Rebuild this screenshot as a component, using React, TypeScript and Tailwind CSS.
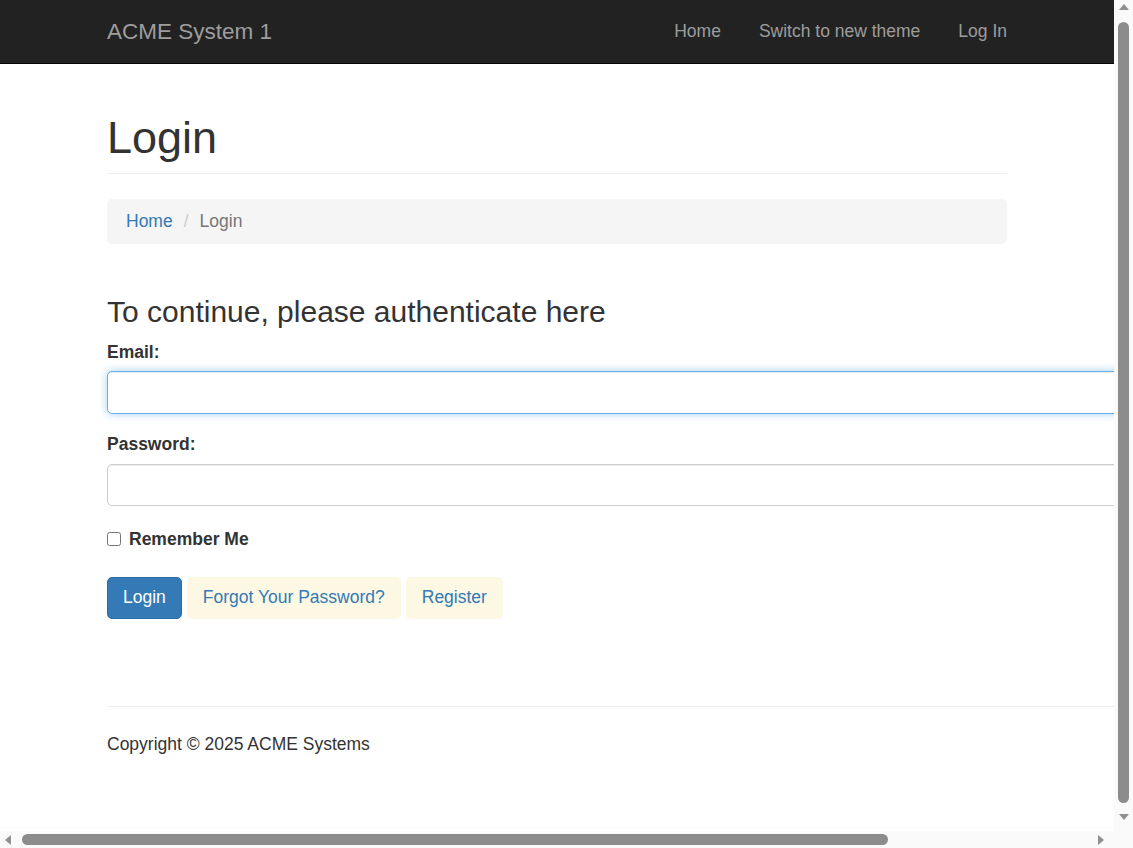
import React from "react";

const navLinks = ["Home", "Switch to new theme", "Log In"];

const Navbar = () => {
  return (
    <div className="w-full h-[64px] bg-[#222222] border-b border-[#080808]">
      <div className="ml-[107px] w-[900px] h-full flex flex-row items-center justify-between">
        <div className="text-[22.5px] text-[#9d9d9d] leading-[25px] -mt-[1px]">ACME System 1</div>
        <div className="flex flex-row items-center gap-[38px] text-[17.5px] text-[#9d9d9d]">
          {navLinks.map((link) => (
            <span key={link}>{link}</span>
          ))}
        </div>
      </div>
    </div>
  );
};

const ScrollV = () => (
  <div className="w-[19px] h-full bg-[#fafafa] flex flex-col items-center">
    <div className="mt-[4px] w-0 h-0 border-l-[5px] border-r-[5px] border-b-[6px] border-l-transparent border-r-transparent border-b-[#8f8f8f]" />
    <div className="mt-[12px] w-[11px] h-[781px] rounded-full bg-[#8c8c8c]" />
    <div className="mt-[11px] w-0 h-0 border-l-[5px] border-r-[5px] border-t-[6px] border-l-transparent border-r-transparent border-t-[#8f8f8f]" />
  </div>
);

const ScrollH = () => (
  <div className="w-[1114px] h-full bg-[#fafafa] flex flex-row items-center">
    <div className="ml-[5px] w-0 h-0 border-t-[5px] border-b-[5px] border-r-[6px] border-t-transparent border-b-transparent border-r-[#8f8f8f]" />
    <div className="ml-[11px] w-[866px] h-[11px] rounded-full bg-[#8c8c8c]" />
    <div className="ml-[210px] w-0 h-0 border-t-[5px] border-b-[5px] border-l-[6px] border-t-transparent border-b-transparent border-l-[#8f8f8f]" />
  </div>
);

const LoginForm = () => {
  return (
    <div className="ml-[107px]">
      <h3 className="mt-[51px] text-[30px] leading-[33px] text-[#333333]">To continue, please authenticate here</h3>

      <label className="block mt-[12px] text-[17.5px] leading-[25px] font-bold text-[#333333]">Email:</label>
      <input
        type="email"
        className="block mt-[6.5px] w-[1300px] h-[43px] rounded-[5px] border border-[#66afe9] bg-white shadow-[inset_0_1px_1px_rgba(0,0,0,0.075),0_0_8px_rgba(102,175,233,0.6)] outline-none"
      />

      <label className="block mt-[18px] text-[17.5px] leading-[25px] font-bold text-[#333333]">Password:</label>
      <input
        type="password"
        className="block mt-[6.5px] w-[1300px] h-[42px] rounded-[5px] border border-[#cccccc] bg-white shadow-[inset_0_1px_1px_rgba(0,0,0,0.075)] outline-none"
      />

      <div className="mt-[21px] flex flex-row items-center gap-[8px]">
        <input type="checkbox" className="w-[14px] h-[14px] m-0" />
        <span className="text-[17.5px] leading-[25px] font-bold text-[#333333]">Remember Me</span>
      </div>

      <div className="mt-[25px] flex flex-row gap-[5px] text-[17.5px] leading-[25px]">
        <button className="h-[42px] px-[15px] rounded-[5px] bg-[#337ab7] border border-[#2e6da4] text-white">Login</button>
        <button className="h-[42px] px-[15px] rounded-[5px] bg-[#fcf8e3] border border-transparent text-[#337ab7]">Forgot Your Password?</button>
        <button className="h-[42px] px-[15px] rounded-[5px] bg-[#fcf8e3] border border-transparent text-[#337ab7]">Register</button>
      </div>
    </div>
  );
};

const App = () => {
  return (
    <div className="w-[1133px] h-[848px] flex flex-col overflow-hidden bg-white font-['Liberation_Sans',Arial,sans-serif] text-[#333333]">
      <div className="flex flex-row h-[831px]">
        <div className="w-[1114px] h-full overflow-hidden">
          <Navbar />
          <div className="ml-[107px] w-[900px] border-b border-[#eeeeee] pb-[10px]">
            <h1 className="mt-[49px] text-[45px] leading-[49.5px] text-[#333333]">Login</h1>
          </div>
          <div className="ml-[107px] w-[900px] mt-[25px] h-[45px] rounded-[5px] bg-[#f5f5f5] px-[19px] flex flex-row items-center text-[17.5px]">
            <span className="text-[#337ab7]">Home</span>
            <span className="text-[#cccccc] pl-[11px] pr-[11px]">/</span>
            <span className="text-[#777777]">Login</span>
          </div>
          <LoginForm />
          <div className="ml-[107px] mt-[87px] w-[1300px] border-t border-[#eeeeee]" />
          <div className="ml-[107px] mt-[25px] text-[17.5px] leading-[25px] text-[#333333]">Copyright © 2025 ACME Systems</div>
        </div>
        <ScrollV />
      </div>
      <div className="flex flex-row h-[17px]">
        <ScrollH />
        <div className="w-[19px] h-full bg-[#fafafa]" />
      </div>
    </div>
  );
};

export default App;
